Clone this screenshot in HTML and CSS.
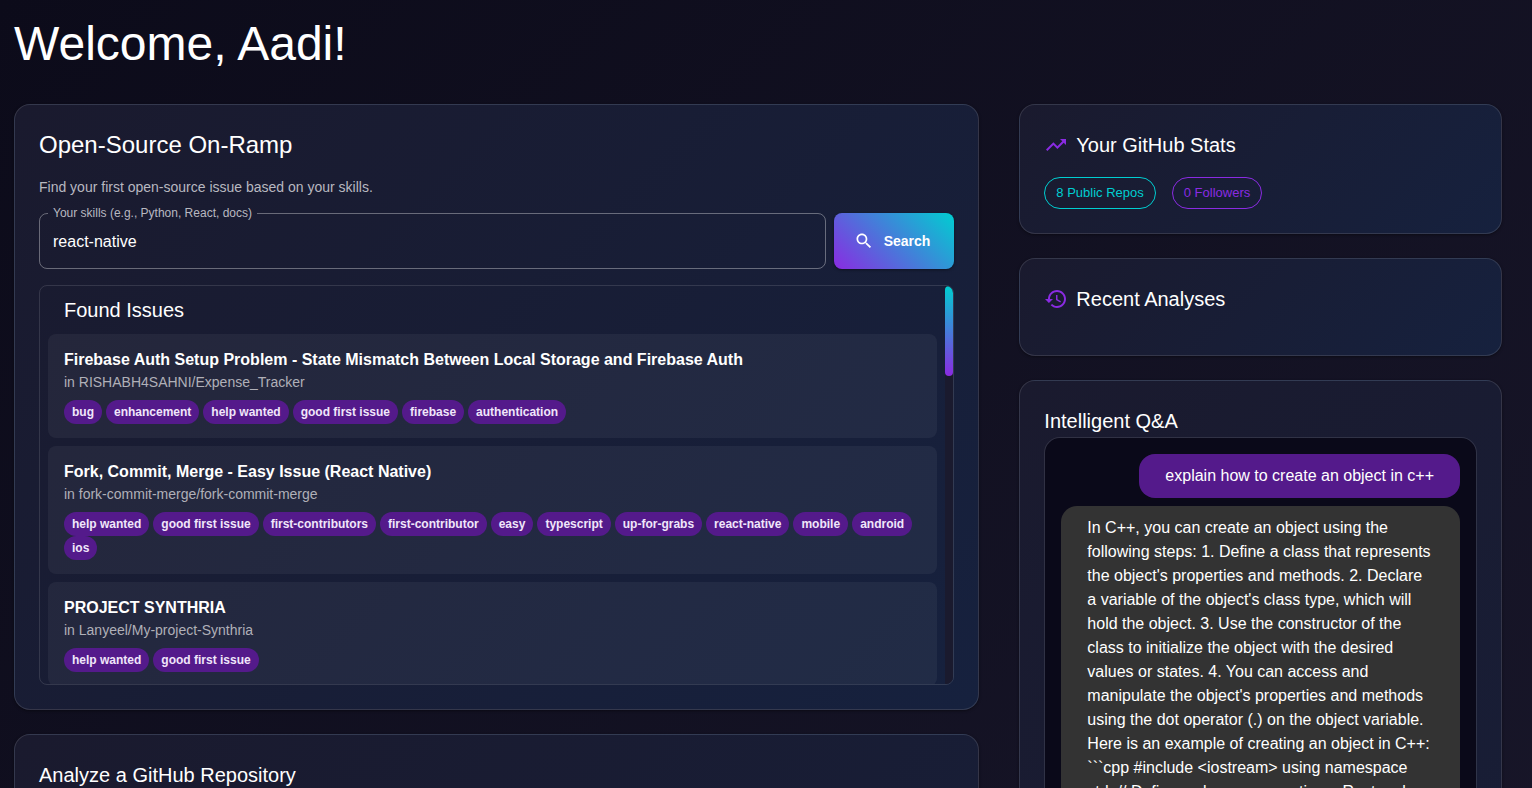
FILE: index.html
```html
<!DOCTYPE html>
<html lang="en">

<head>
    <meta charset="UTF-8">
    <title>Dashboard</title>
    <meta name="viewport" content="width=device-width, initial-scale=1.0">
    <link rel="stylesheet" href="styles.css">
</head>

<body>
    <main class="page">
        <h1>Welcome, Aadi!</h1>

        <div class="dashboard">
            <div class="column">
                <section class="card">
                    <h2 class="main-title">Open-Source On-Ramp</h2>
                    <p class="hint">Find your first open-source issue based on your skills.</p>

                    <form class="search-form">
                        <fieldset class="field">
                            <legend><label for="skills">Your skills (e.g., Python, React, docs)</label></legend>
                            <input type="text" id="skills" value="react-native">
                        </fieldset>
                        <button type="button" class="search-btn">
                            <svg width="20" height="20" viewBox="0 0 24 24" fill="currentColor">
                                <path d="M15.5 14h-.79l-.28-.27C15.41 12.59 16 11.11 16 9.5 16 5.91 13.09 3 9.5 3S3 5.91 3 9.5 5.91 16 9.5 16c1.61 0 3.09-.59 4.23-1.57l.27.28v.79l5 4.99L20.49 19zm-6 0C7.01 14 5 11.99 5 9.5S7.01 5 9.5 5 14 7.01 14 9.5 11.99 14 9.5 14" />
                            </svg>
                            Search
                        </button>
                    </form>

                    <div class="results">
                        <div class="results-body">
                            <h3>Found Issues</h3>
                            <ul class="issues">
                                <li class="issue">
                                    <h4>Firebase Auth Setup Problem - State Mismatch Between Local Storage and Firebase Auth</h4>
                                    <p>in RISHABH4SAHNI/Expense_Tracker</p>
                                    <div class="labels">
                                        <span class="label">bug</span>
                                        <span class="label">enhancement</span>
                                        <span class="label">help wanted</span>
                                        <span class="label">good first issue</span>
                                        <span class="label">firebase</span>
                                        <span class="label">authentication</span>
                                    </div>
                                </li>
                                <li class="issue">
                                    <h4>Fork, Commit, Merge - Easy Issue (React Native)</h4>
                                    <p>in fork-commit-merge/fork-commit-merge</p>
                                    <div class="labels">
                                        <span class="label">help wanted</span>
                                        <span class="label">good first issue</span>
                                        <span class="label">first-contributors</span>
                                        <span class="label">first-contributor</span>
                                        <span class="label">easy</span>
                                        <span class="label">typescript</span>
                                        <span class="label">up-for-grabs</span>
                                        <span class="label">react-native</span>
                                        <span class="label">mobile</span>
                                        <span class="label">android</span>
                                        <span class="label">ios</span>
                                    </div>
                                </li>
                                <li class="issue">
                                    <h4>PROJECT SYNTHRIA</h4>
                                    <p>in Lanyeel/My-project-Synthria</p>
                                    <div class="labels">
                                        <span class="label">help wanted</span>
                                        <span class="label">good first issue</span>
                                    </div>
                                </li>
                            </ul>
                        </div>
                        <div class="scroll-track">
                            <div class="scroll-thumb"></div>
                        </div>
                    </div>
                </section>

                <section class="card card-tall">
                    <h2>Analyze a GitHub Repository</h2>
                </section>
            </div>

            <div class="column">
                <section class="card">
                    <div class="card-head">
                        <svg width="24" height="24" viewBox="0 0 24 24" fill="currentColor">
                            <path d="m16 6 2.29 2.29-4.88 4.88-4-4L2 16.59 3.41 18l6-6 4 4 6.3-6.29L22 12V6z" />
                        </svg>
                        <h2>Your GitHub Stats</h2>
                    </div>
                    <div class="stats">
                        <span class="stat stat-repos">8 Public Repos</span>
                        <span class="stat stat-followers">0 Followers</span>
                    </div>
                </section>

                <section class="card">
                    <div class="card-head">
                        <svg width="24" height="24" viewBox="0 0 24 24" fill="currentColor">
                            <path d="M13 3c-4.97 0-9 4.03-9 9H1l3.89 3.89.07.14L9 12H6c0-3.87 3.13-7 7-7s7 3.13 7 7-3.13 7-7 7c-1.93 0-3.68-.79-4.94-2.06l-1.42 1.42C8.27 19.99 10.51 21 13 21c4.97 0 9-4.03 9-9s-4.03-9-9-9m-1 5v5l4.28 2.54.72-1.21-3.5-2.08V8z" />
                        </svg>
                        <h2>Recent Analyses</h2>
                    </div>
                </section>

                <section class="card card-tall">
                    <h2>Intelligent Q&amp;A</h2>
                    <div class="chat">
                        <div class="message message-user">explain how to create an object in c++</div>
                        <div class="message message-bot">In C++, you can create an object using the following steps: 1. Define a class that represents the object's properties and methods. 2. Declare a variable of the object's class type, which will hold the object. 3. Use the constructor of the class to initialize the object with the desired values or states. 4. You can access and manipulate the object's properties and methods using the dot operator (.) on the object variable. Here is an example of creating an object in C++: ```cpp #include &lt;iostream&gt; using namespace std; // Define a class representing a Rectangle</div>
                    </div>
                </section>
            </div>
        </div>
    </main>
</body>

</html>
```
FILE: styles.css
```css
* {
    box-sizing: border-box;
}

body {
    margin: 0;
    height: 100vh;
    overflow: hidden;
    font-family: "Liberation Sans", Arial, sans-serif;
    font-size: 16px;
    line-height: 24px;
    color: #fff;
    background: #0c0b1a;
}

.page {
    padding: 16px 30px 24px 14px;
    background: linear-gradient(135deg, #0c0b1a, #1c1a2e);
}

h1,
h2,
h3,
h4,
p {
    margin: 0;
    font-weight: 400;
}

h1 {
    margin-bottom: 32px;
    font-size: 48px;
    line-height: 56px;
}

h2,
h3 {
    font-size: 20px;
    line-height: 32px;
}

.dashboard {
    display: grid;
    grid-template-columns: minmax(0, 2fr) minmax(0, 1fr);
    gap: 40px;
}

.column {
    display: flex;
    flex-direction: column;
    gap: 24px;
}

.card {
    padding: 24px;
    border: 1px solid rgba(255, 255, 255, 0.12);
    border-radius: 16px;
    background: linear-gradient(135deg, #1a1a2e, #16213e);
    box-shadow: 0 1px 3px rgba(0, 0, 0, 0.4);
}

.card-tall {
    flex: 1;
    min-height: 1100px;
}

/* search */

.main-title {
    margin-bottom: 16px;
    font-size: 24px;
}

.hint {
    margin-bottom: 16px;
    font-size: 14px;
    line-height: 20px;
    color: #b8b8c0;
}

.search-form {
    display: flex;
    gap: 8px;
    height: 56px;
    margin-bottom: 16px;
}

.field {
    flex: 1;
    min-width: 0;
    margin: 0;
    padding: 0 13px;
    border: 1px solid rgba(255, 255, 255, 0.35);
    border-radius: 8px;
}

.field legend {
    height: 1px;
    margin-left: -5px;
    padding: 0 5px;
    font-size: 12px;
    line-height: 1px;
    color: #b8b8c0;
}

.field input {
    display: block;
    width: 100%;
    height: 56px;
    padding: 0;
    border: 0;
    outline: 0;
    font: inherit;
    color: #fff;
    background: transparent;
}

.search-btn {
    display: flex;
    align-items: center;
    gap: 10px;
    padding: 0 24px 0 20px;
    border: 0;
    border-radius: 8px;
    font-family: inherit;
    font-size: 14px;
    font-weight: 700;
    color: #fff;
    background: linear-gradient(45deg, #8a2be2, #00ced1);
    box-shadow: 0 1px 3px rgba(0, 0, 0, 0.4);
}

/* issue list */

.results {
    display: flex;
    height: 400px;
    overflow: hidden;
    border: 1px solid rgba(255, 255, 255, 0.12);
    border-radius: 8px;
}

.results-body {
    flex: 1;
    min-width: 0;
    padding: 0 8px;
}

.results-body h3 {
    padding: 0 16px;
    line-height: 48px;
}

.issues {
    display: flex;
    flex-direction: column;
    gap: 8px;
    margin: 0;
    padding: 0;
    list-style: none;
}

.issue {
    padding: 14px 16px;
    border-radius: 8px;
    background: rgba(255, 255, 255, 0.05);
}

.issue h4 {
    font-size: 16px;
    font-weight: 700;
}

.issue p {
    font-size: 14px;
    line-height: 20px;
    color: #b0b0b8;
}

.labels {
    display: flex;
    flex-wrap: wrap;
    column-gap: 4px;
    margin-top: 8px;
}

.label {
    padding: 0 8px;
    border-radius: 12px;
    font-size: 12px;
    font-weight: 700;
    color: #f0e6fa;
    background: #541a8b;
}

.scroll-track {
    width: 8px;
    background: #1a1a2e;
}

.scroll-thumb {
    height: 90px;
    border-radius: 4px;
    background: linear-gradient(#00ced1, #8a2be2);
}

/* right column */

.card-head {
    display: flex;
    align-items: center;
    gap: 8px;
    margin-bottom: 16px;
}

.card-head svg {
    color: #8a2be2;
}

.stats {
    display: flex;
    gap: 16px;
}

.stat {
    padding: 0 11px;
    border: 1px solid currentColor;
    border-radius: 16px;
    font-size: 13px;
    line-height: 30px;
}

.stat-repos {
    color: #00ced1;
}

.stat-followers {
    color: #8a2be2;
}

.chat {
    display: flex;
    flex-direction: column;
    gap: 8px;
    min-height: 560px;
    padding: 16px;
    border: 1px solid rgba(255, 255, 255, 0.1);
    border-radius: 16px;
    background: #0a0919 padding-box;
}

.message {
    padding: 10px 26px;
    border-radius: 16px;
}

.message-user {
    align-self: flex-end;
    background: #541a8b;
}

.message-bot {
    align-self: flex-start;
    background: #333;
}
```
